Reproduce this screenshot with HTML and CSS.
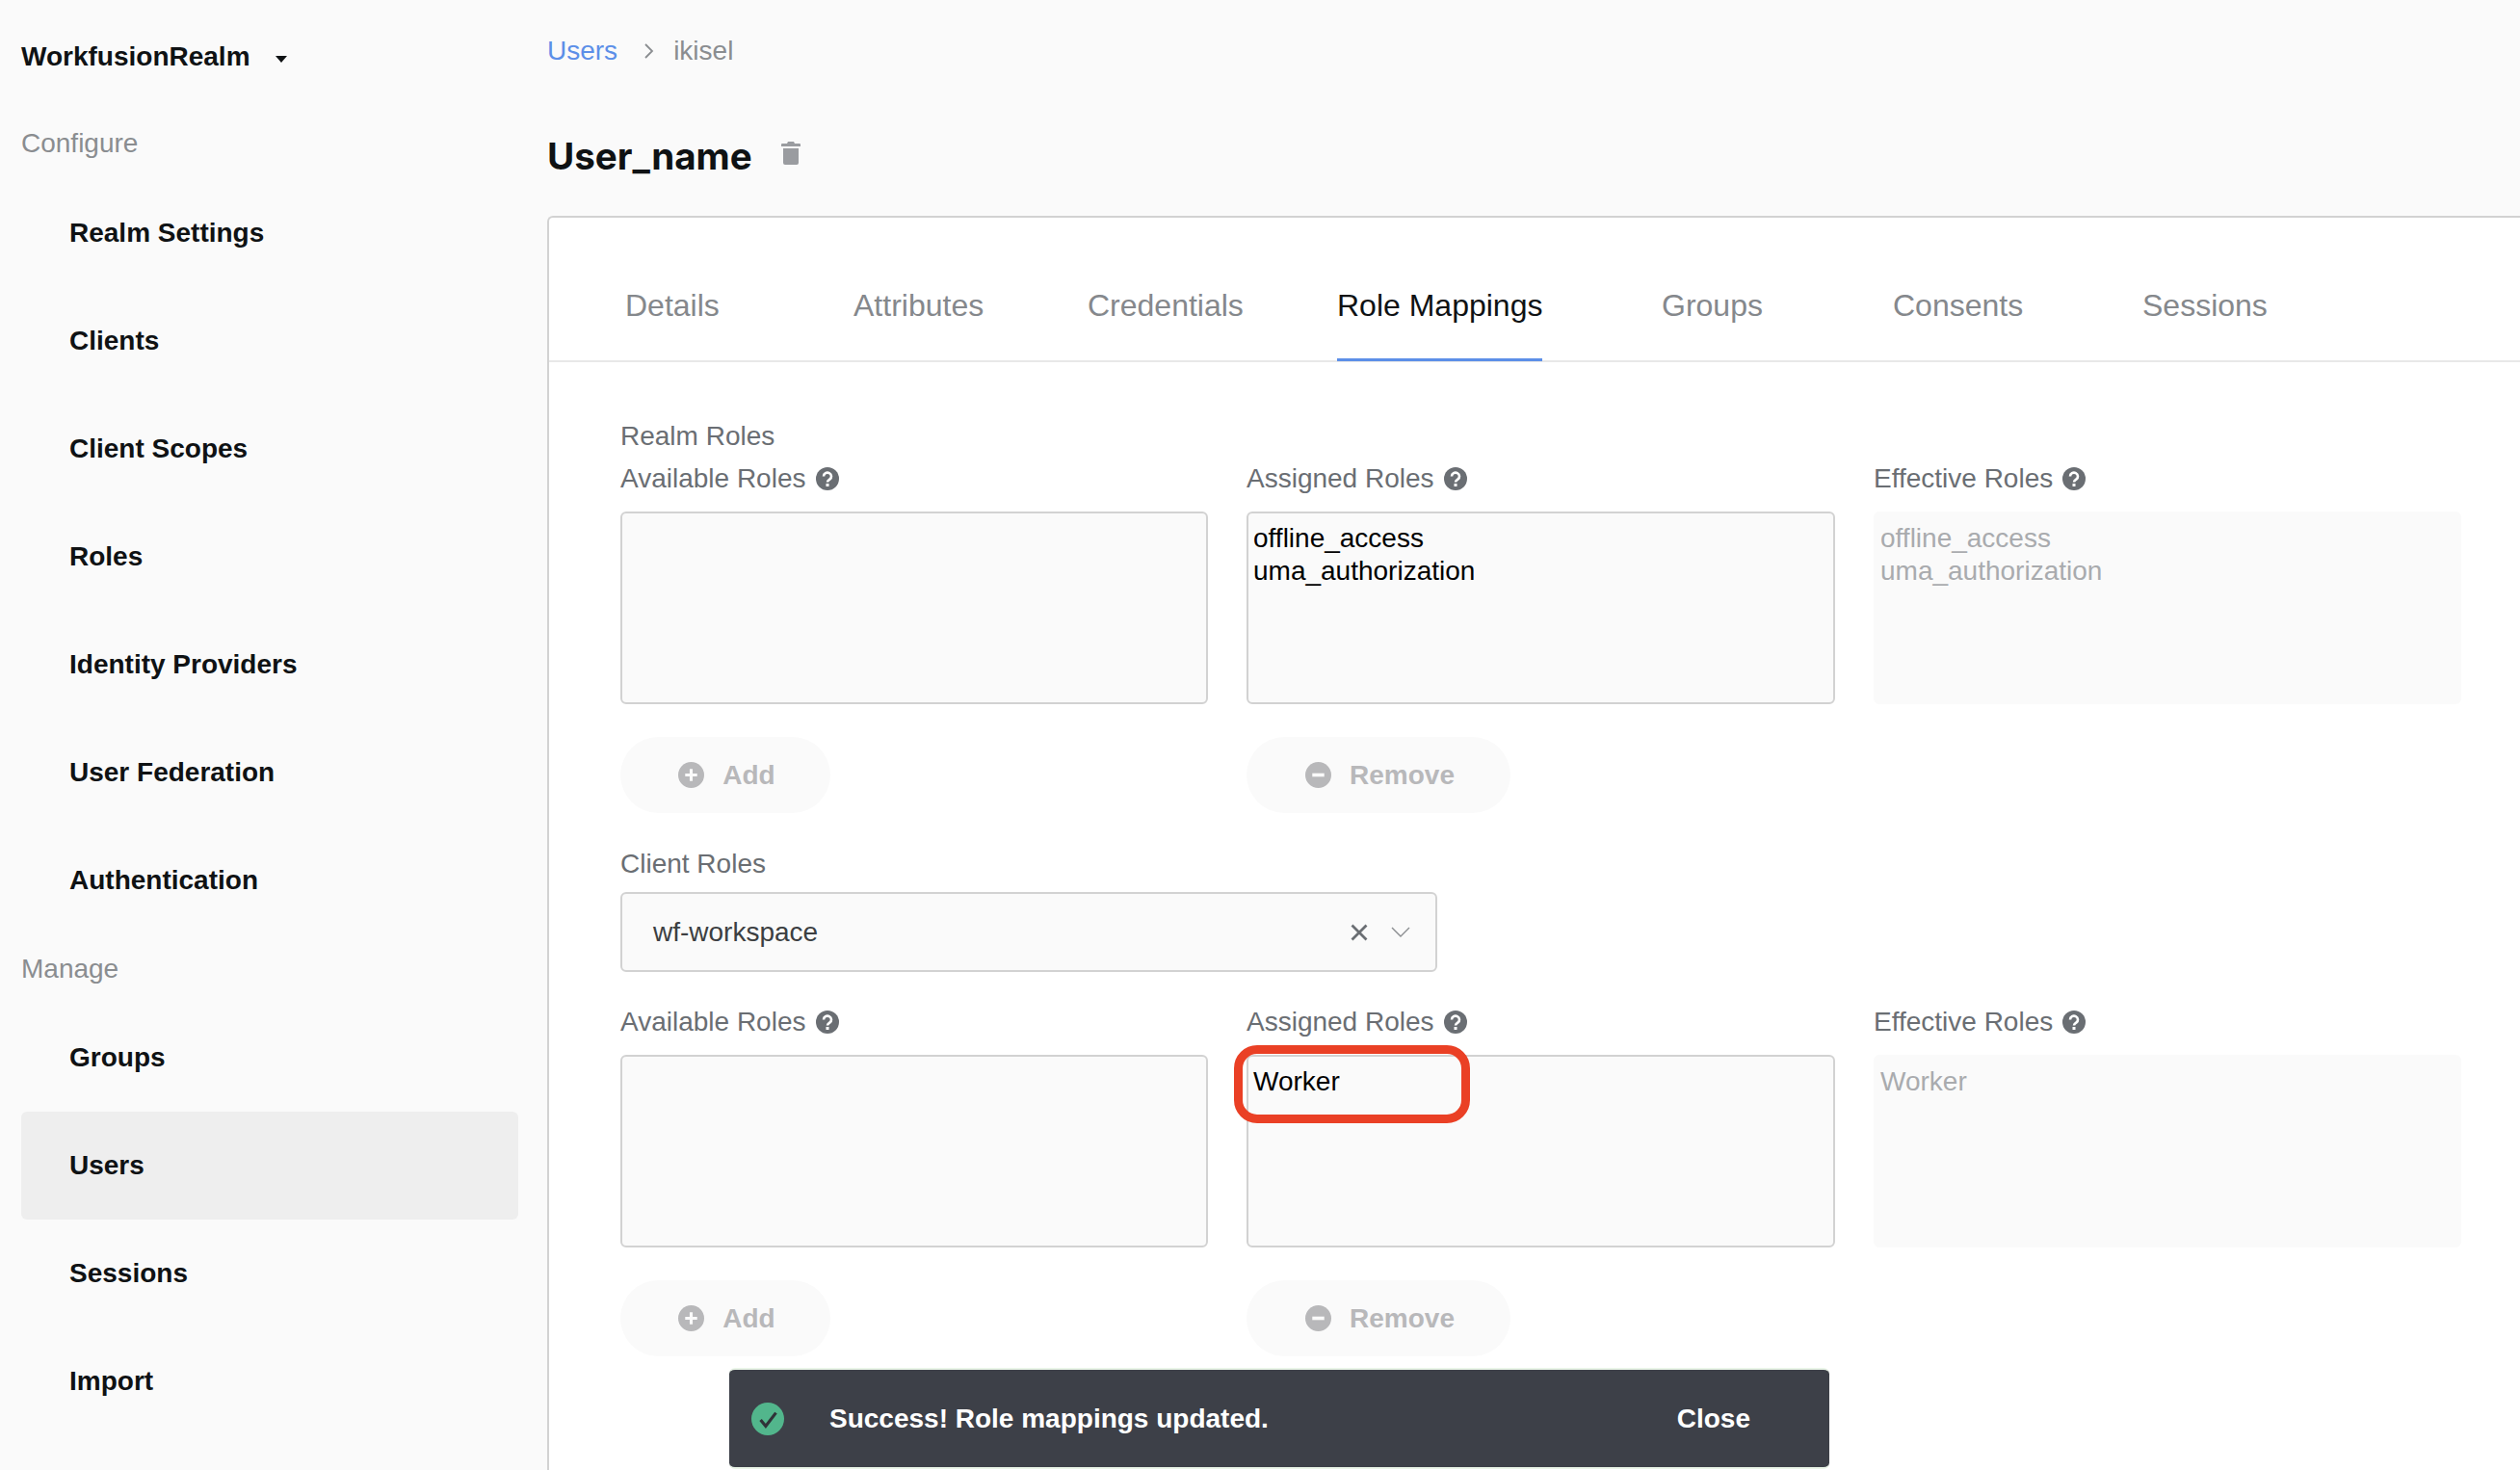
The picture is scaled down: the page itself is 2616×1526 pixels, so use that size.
FILE: index.html
```html
<!DOCTYPE html>
<html lang="en">
  <head>
    <meta charset="UTF-8" />
    <meta name="viewport" content="width=device-width, initial-scale=1.0" />
    <title>User_name</title>
    <link rel="stylesheet" href="styles.css">
  </head>

  <body>
    <!-- Sidebar -->
    <aside class="sidebar">
      <div class="realm">WorkfusionRealm <span class="realm_caret"></span></div>
      <div class="nav_heading">Configure</div>
      <a class="nav_item">Realm Settings</a>
      <a class="nav_item">Clients</a>
      <a class="nav_item">Client Scopes</a>
      <a class="nav_item">Roles</a>
      <a class="nav_item">Identity Providers</a>
      <a class="nav_item">User Federation</a>
      <a class="nav_item">Authentication</a>
      <div class="nav_heading nav_heading_manage">Manage</div>
      <a class="nav_item">Groups</a>
      <a class="nav_item nav_item_active">Users</a>
      <a class="nav_item">Sessions</a>
      <a class="nav_item">Import</a>
    </aside>

    <main class="content">
      <nav class="breadcrumb">
        <a class="breadcrumb_link">Users</a>
        <svg class="breadcrumb_sep" viewBox="0 0 12 20"><path d="M2 3l7 7-7 7" fill="none" stroke="#8a8d90" stroke-width="1.8"/></svg>
        <span>ikisel</span>
      </nav>

      <div class="title_row">
        <h1>User_name</h1>
        <svg class="trash" viewBox="0 0 20 24"><path d="M7 0h6l1 2h5a1 1 0 0 1 1 1v2H0V3a1 1 0 0 1 1-1h5zM2 7h16v15a2 2 0 0 1-2 2H4a2 2 0 0 1-2-2z" fill="#9a9ca0"/></svg>
      </div>

      <section class="card">
        <div class="tabs">
          <a class="tab">Details</a>
          <a class="tab">Attributes</a>
          <a class="tab">Credentials</a>
          <a class="tab tab_active"><span>Role Mappings</span></a>
          <a class="tab">Groups</a>
          <a class="tab">Consents</a>
          <a class="tab">Sessions</a>
        </div>

        <div class="panel">
          <div class="label">Realm Roles</div>
          <div class="role_grid">
            <div class="label">Available Roles <svg class="help"><use href="#help"/></svg></div>
            <div class="label">Assigned Roles <svg class="help"><use href="#help"/></svg></div>
            <div class="label">Effective Roles <svg class="help"><use href="#help"/></svg></div>
            <div class="listbox"></div>
            <div class="listbox">offline_access<br>uma_authorization</div>
            <div class="listbox listbox_readonly">offline_access<br>uma_authorization</div>
            <div><button class="btn btn_add"><svg class="btn_icon"><use href="#plus"/></svg>Add</button></div>
            <div><button class="btn btn_remove"><svg class="btn_icon"><use href="#minus"/></svg>Remove</button></div>
          </div>

          <div class="label client_label">Client Roles</div>
          <div class="select">
            <span class="select_value">wf-workspace</span>
            <svg class="select_clear" viewBox="0 0 16 16"><path d="M2 2l12 12M14 2L2 14" stroke="#6a6e73" stroke-width="2.2" fill="none"/></svg>
            <svg class="select_arrow" viewBox="0 0 20 12"><path d="M1 1l9 9 9-9" stroke="#8a8d90" stroke-width="1.4" fill="none"/></svg>
          </div>

          <div class="role_grid role_grid_client">
            <div class="label">Available Roles <svg class="help"><use href="#help"/></svg></div>
            <div class="label">Assigned Roles <svg class="help"><use href="#help"/></svg></div>
            <div class="label">Effective Roles <svg class="help"><use href="#help"/></svg></div>
            <div class="listbox"></div>
            <div class="listbox">Worker</div>
            <div class="listbox listbox_readonly">Worker</div>
            <div><button class="btn btn_add"><svg class="btn_icon"><use href="#plus"/></svg>Add</button></div>
            <div><button class="btn btn_remove"><svg class="btn_icon"><use href="#minus"/></svg>Remove</button></div>
          </div>
        </div>
      </section>
    </main>

    <!-- Overlays -->
    <div class="highlight"></div>
    <div class="snackbar">
      <svg class="snackbar_icon" viewBox="0 0 32 32"><circle cx="16" cy="16" r="16" fill="#52b68c"/><path d="M9 17l5 6 10-13" fill="none" stroke="#2f3238" stroke-width="3"/></svg>
      <span class="snackbar_text">Success! Role mappings updated.</span>
      <span class="snackbar_close">Close</span>
    </div>

    <!-- Shared icons -->
    <svg class="icon_defs">
      <symbol id="help" viewBox="0 0 24 24">
        <circle cx="12" cy="12" r="12" fill="#6a6e73"/>
        <path d="M8 9.5a4 3.8 0 1 1 6.3 3.1c-1.5 1-2.3 1.5-2.3 3" fill="none" stroke="#fff" stroke-width="2.6"/>
        <rect x="10.5" y="17" width="3" height="3" fill="#fff"/>
      </symbol>
      <symbol id="plus" viewBox="0 0 26 26">
        <circle cx="13" cy="13" r="13" fill="#b8b8ba"/>
        <path d="M13 7v12M7 13h12" stroke="#fafafa" stroke-width="3"/>
      </symbol>
      <symbol id="minus" viewBox="0 0 26 26">
        <circle cx="13" cy="13" r="13" fill="#b8b8ba"/>
        <path d="M7 13h12" stroke="#fafafa" stroke-width="3.5"/>
      </symbol>
    </svg>
  </body>
</html>
```

FILE: styles.css
```css
* {
  box-sizing: border-box;
}

body {
  margin: 0;
  height: 1526px;
  overflow: hidden;
  display: flex;
  background-color: #fafafa;
  font-family: "Liberation Sans", Arial, sans-serif;
  font-size: 28px;
  color: #6a6e73;
}

.icon_defs {
  display: none;
}

/* Sidebar */
.sidebar {
  width: 568px;
  flex-shrink: 0;
  padding: 0 30px 0 22px;
}

.realm {
  height: 118px;
  display: flex;
  align-items: center;
  font-weight: 700;
  color: #0f1214;
}

.realm_caret {
  margin: 4px 0 0 26px;
  border-top: 7px solid #0f1214;
  border-left: 6px solid transparent;
  border-right: 6px solid transparent;
}

.nav_heading {
  height: 62px;
  margin-bottom: 6px;
  display: flex;
  align-items: center;
  color: #8a8d90;
}

.nav_heading_manage {
  height: 72px;
  margin-bottom: 0;
}

.nav_item {
  height: 112px;
  display: flex;
  align-items: center;
  padding-left: 50px;
  font-weight: 700;
  color: #0f1214;
  border-radius: 6px;
}

.nav_item_active {
  background-color: #eeeeee;
}

/* Main */
.content {
  flex: 1;
  min-width: 0;
}

.breadcrumb {
  height: 106px;
  display: flex;
  align-items: center;
  gap: 19px;
  color: #8a8d90;
}

.breadcrumb_link {
  color: #5c8fe8;
}

.breadcrumb_sep {
  width: 12px;
  height: 20px;
  margin-left: 8px;
}

.title_row {
  height: 118px;
  display: flex;
  align-items: center;
  gap: 30px;
  padding-bottom: 6px;
}

h1 {
  margin: 0;
  font-family: Inter, sans-serif;
  font-size: 38.6px;
  font-weight: 700;
  color: #0f1214;
}

.trash {
  width: 20px;
  height: 24px;
  margin-bottom: 6px;
}

.card {
  height: 1302px;
  background-color: #fff;
  border: 2px solid #d2d2d2;
  border-right: 0;
  border-bottom: 0;
  border-top-left-radius: 6px;
}

/* Tabs */
.tabs {
  height: 150px;
  display: grid;
  grid-template-columns: 237px 243px 259px 337px 240px 259px auto;
  padding-left: 79px;
  border-bottom: 2px solid #e8e8e8;
  font-size: 32px;
  color: #85888c;
}

.tab {
  padding-top: 73px;
}

.tab_active {
  color: #0f1214;
}

.tab_active span {
  display: inline-block;
  height: 76px;
  border-bottom: 3px solid #5c8fe8;
}

/* Roles */
.panel {
  padding: 55px 0 0 74px;
}

.label {
  height: 44px;
  display: flex;
  align-items: center;
  gap: 10px;
  color: #6a6e73;
}

.role_grid {
  display: grid;
  grid-template-columns: 610px 611px 610px;
  column-gap: 40px;
  grid-template-rows: 44px 200px auto;
  row-gap: 12px;
}

.help {
  width: 24px;
  height: 24px;
}

.listbox {
  padding: 9px 5px;
  border: 2px solid #d2d2d2;
  border-radius: 6px;
  background-color: #fafafa;
  line-height: 34px;
  color: #000;
}

.listbox_readonly {
  border-color: #fafafa;
  color: #a9abae;
}

.btn {
  height: 79px;
  display: inline-flex;
  align-items: center;
  justify-content: center;
  gap: 19px;
  margin-top: 22px;
  padding: 0 0 0 3px;
  border: 0;
  border-radius: 40px;
  background-color: #fafafa;
  font-family: inherit;
  font-size: 28px;
  font-weight: 700;
  color: #b8b8ba;
}

.btn_add {
  width: 218px;
}

.btn_remove {
  width: 274px;
}

.btn_icon {
  width: 27px;
  height: 27px;
}

.client_label {
  margin-top: 31px;
}

.select {
  width: 848px;
  height: 83px;
  margin-top: 7px;
  display: flex;
  align-items: center;
  padding: 0 26px 0 32px;
  border: 2px solid #d2d2d2;
  border-radius: 6px;
  background-color: #fafafa;
  color: #3c3f42;
}

.select_value {
  flex: 1;
}

.select_clear {
  width: 20px;
  height: 20px;
  margin-right: 23px;
}

.select_arrow {
  width: 20px;
  height: 12px;
}

.role_grid_client {
  margin-top: 30px;
}

/* Overlays */
.highlight {
  position: absolute;
  left: 1281px;
  top: 1085px;
  width: 245px;
  height: 81px;
  border: 9px solid #ea4025;
  border-radius: 24px;
}

.snackbar {
  position: absolute;
  left: 757px;
  top: 1420px;
  width: 1142px;
  height: 105px;
  display: flex;
  align-items: center;
  padding: 0 82px 0 21px;
  border: 2px solid #eaf5e8;
  border-left: 0;
  border-right: 0;
  border-radius: 6px;
  background-color: #3d4048;
  font-weight: 700;
  color: #fff;
}

.snackbar_icon {
  width: 34px;
  height: 34px;
  margin: 0 47px 0 2px;
}

.snackbar_text {
  flex: 1;
}
```
